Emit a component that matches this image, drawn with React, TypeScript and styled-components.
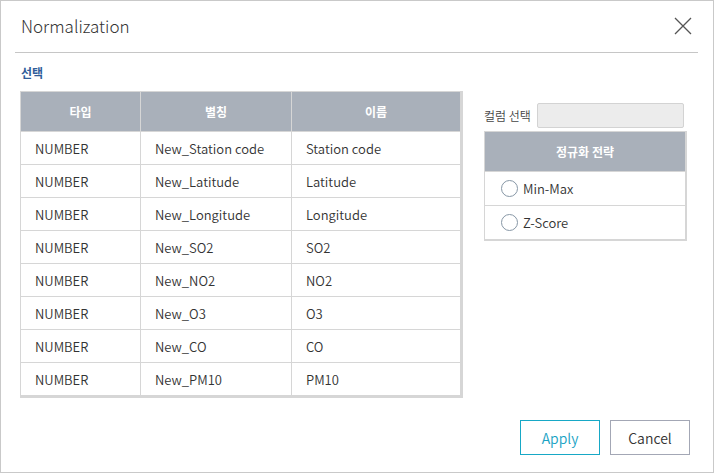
import React from "react";
import styled, { createGlobalStyle } from "styled-components";

const Global = createGlobalStyle`
  html, body { margin: 0; padding: 0; background: #fff; }
  body { font-family: "Noto Sans CJK KR", "Noto Sans", sans-serif; color: #333; }
  * { box-sizing: border-box; }
`;

const Dialog = styled.div`
  width: 714px;
  height: 473px;
  border: 1px solid #c9c9c9;
  background: #fff;
  display: flex;
  flex-direction: column;
`;

const Header = styled.div`
  height: 52px;
  margin: 0 15px 0 14px;
  padding: 0 6px;
  border-bottom: 1px solid #c6c6c6;
  display: flex;
  align-items: center;
  justify-content: space-between;
`;

const Title = styled.h1`
  margin: 0;
  font-size: 17px;
  font-weight: 300;
  color: #333;
  line-height: 1;
  padding-bottom: 3px;
`;

const CloseButton = styled.button`
  border: 0;
  background: none;
  padding: 0;
  width: 18px;
  height: 18px;
  display: flex;
  align-items: center;
  justify-content: center;
  margin-bottom: 2px;
`;

const Body = styled.div`
  flex: 1;
  display: flex;
  gap: 21px;
  padding: 0 19px;
`;

const LeftCol = styled.div`
  width: 443px;
  display: flex;
  flex-direction: column;
`;

const SectionLabel = styled.div`
  font-size: 12px;
  font-weight: 700;
  color: #2f5d9a;
  margin: 13px 0 0 1px;
  height: 25px;
  line-height: 14px;
`;

const TableWrap = styled.div`
  border-right: 2px solid #d6d6d6;
  border-bottom: 2px solid #d6d6d6;
`;

const Table = styled.table`
  width: 100%;
  border-collapse: collapse;
  table-layout: fixed;
`;

const Th = styled.th<{ $w?: number }>`
  width: ${(p) => (p.$w ? `${p.$w}px` : "auto")};
  height: 40px;
  background: #a9b0ba;
  color: #fff;
  font-size: 12px;
  font-weight: 700;
  text-align: center;
  border: 1px solid #d6d6d6;
  padding: 0;
`;

const Td = styled.td`
  height: 33px;
  padding: 0 0 0 14px;
  font-size: 13px;
  font-weight: 350;
  color: #333;
  border: 1px solid #d6d6d6;
  text-align: left;
  white-space: nowrap;
`;

const RightCol = styled.div`
  width: 203px;
  padding-top: 50px;
  display: flex;
  flex-direction: column;
`;

const FieldRow = styled.div`
  display: flex;
  align-items: center;
  gap: 6px;
  margin-bottom: 3px;
`;

const FieldLabel = styled.span`
  font-size: 12px;
  font-weight: 350;
  color: #444;
`;

const FieldInput = styled.div`
  width: 147px;
  height: 25px;
  background: #ececec;
  border: 1px solid #d3d3d3;
  border-radius: 2px;
`;

const StrategyWrap = styled.div`
  width: 203px;
  border-right: 2px solid #d6d6d6;
  border-bottom: 2px solid #d6d6d6;
`;

const StrategyHead = styled.div`
  height: 40px;
  background: #a9b0ba;
  color: #fff;
  font-size: 12px;
  font-weight: 700;
  display: flex;
  align-items: center;
  justify-content: center;
  border: 1px solid #d6d6d6;
  border-right: 0;
  border-bottom: 0;
`;

const OptionRow = styled.label`
  height: 34px;
  display: flex;
  align-items: center;
  gap: 5px;
  padding-left: 16px;
  border-left: 1px solid #d6d6d6;
  border-top: 1px solid #d6d6d6;
  font-size: 13px;
  font-weight: 350;
  color: #333;
`;

const Radio = styled.span`
  width: 17px;
  height: 17px;
  border-radius: 50%;
  border: 1px solid #8797a6;
  background: #fff;
`;

const Footer = styled.div`
  display: flex;
  justify-content: flex-end;
  gap: 10px;
  padding: 0 23px 17px 0;
`;

const Button = styled.button<{ $primary?: boolean }>`
  width: 80px;
  height: 35px;
  background: #fff;
  border: 1px solid ${(p) => (p.$primary ? "#17a8c6" : "#a3a7b5")};
  color: ${(p) => (p.$primary ? "#1aa3c4" : "#333")};
  font-family: inherit;
  font-size: 14px;
  font-weight: 350;
  padding: 0;
  cursor: pointer;
`;

const rows = [
  ["NUMBER", "New_Station code", "Station code"],
  ["NUMBER", "New_Latitude", "Latitude"],
  ["NUMBER", "New_Longitude", "Longitude"],
  ["NUMBER", "New_SO2", "SO2"],
  ["NUMBER", "New_NO2", "NO2"],
  ["NUMBER", "New_O3", "O3"],
  ["NUMBER", "New_CO", "CO"],
  ["NUMBER", "New_PM10", "PM10"],
];

export default function App() {
  return (
    <>
      <Global />
      <Dialog>
        <Header>
          <Title>Normalization</Title>
          <CloseButton aria-label="close">
            <svg width="18" height="18" viewBox="0 0 18 18">
              <path d="M1 1 L17 17 M17 1 L1 17" stroke="#555" strokeWidth="1.3" fill="none" />
            </svg>
          </CloseButton>
        </Header>
        <Body>
          <LeftCol>
            <SectionLabel>선택</SectionLabel>
            <TableWrap>
              <Table>
                <thead>
                  <tr>
                    <Th $w={120}>타입</Th>
                    <Th $w={151}>별칭</Th>
                    <Th>이름</Th>
                  </tr>
                </thead>
                <tbody>
                  {rows.map((r) => (
                    <tr key={r[1]}>
                      <Td>{r[0]}</Td>
                      <Td>{r[1]}</Td>
                      <Td>{r[2]}</Td>
                    </tr>
                  ))}
                </tbody>
              </Table>
            </TableWrap>
          </LeftCol>
          <RightCol>
            <FieldRow>
              <FieldLabel>컬럼 선택</FieldLabel>
              <FieldInput />
            </FieldRow>
            <StrategyWrap>
              <StrategyHead>정규화 전략</StrategyHead>
              <OptionRow>
                <Radio />
                Min-Max
              </OptionRow>
              <OptionRow>
                <Radio />
                Z-Score
              </OptionRow>
            </StrategyWrap>
          </RightCol>
        </Body>
        <Footer>
          <Button $primary>Apply</Button>
          <Button>Cancel</Button>
        </Footer>
      </Dialog>
    </>
  );
}
